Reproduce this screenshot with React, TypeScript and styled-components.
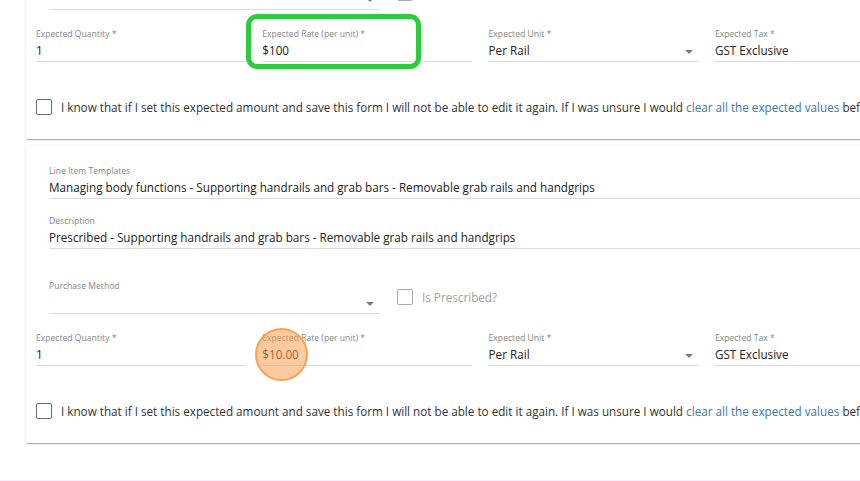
import React from 'react';
import styled, { createGlobalStyle } from 'styled-components';

const GlobalStyle = createGlobalStyle`
  html, body {
    margin: 0;
    padding: 0;
    background: #fff;
    overflow: hidden;
    font-family: 'Open Sans', 'Noto Sans', sans-serif;
  }
`;

const Page = styled.div`
  height: 481px;
  display: flex;
  flex-direction: column;
  overflow: hidden;
`;

const Cards = styled.div`
  margin-top: -158px;
  display: flex;
  flex-direction: column;
  gap: 7px;
`;

const Card = styled.div`
  margin-left: 26px;
  width: 900px;
  background: #fff;
  border-radius: 2px;
  box-shadow: 0 2px 1px -1px rgba(0,0,0,0.2), 0 1px 1px 0 rgba(0,0,0,0.12), 0 1px 3px 0 rgba(0,0,0,0.1);
  padding: 19px 0 25px 10px;
  box-sizing: border-box;
  height: 297px;
`;

const Upper = styled.div`
  padding-left: 13px;
  display: flex;
  flex-direction: column;
`;

const Field = styled.div<{ $gap?: number; $width?: number }>`
  position: relative;
  margin-top: ${p => p.$gap || 0}px;
  width: ${p => (p.$width ? `${p.$width}px` : 'auto')};
  border-bottom: 1px solid #dcdcdc;
  display: flex;
  flex-direction: column;
`;

const Label = styled.div`
  font-size: 8.6px;
  line-height: 12px;
  color: #858585;
  white-space: nowrap;
`;

const Value = styled.div`
  font-size: 11.7px;
  line-height: 21px;
  height: 21px;
  color: #222;
  white-space: nowrap;
  display: flex;
  align-items: center;
  justify-content: space-between;
  padding-right: 6px;
`;

const Arrow = styled.span`
  width: 0;
  height: 0;
  border-left: 4px solid transparent;
  border-right: 4px solid transparent;
  border-top: 4px solid #7a7a7a;
  margin-top: 2px;
`;

const PurchaseRow = styled.div`
  display: flex;
  align-items: center;
  gap: 17px;
  margin-top: 31px;
`;

const Box = styled.span<{ $light?: boolean }>`
  width: 16px;
  height: 16px;
  box-sizing: border-box;
  border: 1.5px solid ${p => (p.$light ? '#a9a9a9' : '#6b6b6b')};
  border-radius: 2px;
  flex-shrink: 0;
`;

const CheckLabel = styled.label<{ $muted?: boolean }>`
  display: flex;
  align-items: center;
  gap: 9px;
  font-size: 11.7px;
  color: ${p => (p.$muted ? '#a0a0a0' : '#333')};
  white-space: nowrap;
`;

const Grid = styled.div`
  display: grid;
  grid-template-columns: repeat(4, 210px);
  column-gap: 16.3px;
  margin-top: 18px;
`;

const Confirm = styled(CheckLabel)`
  margin-top: 36px;
  padding-top: 1px;
`;

const Link = styled.a`
  color: #3b78ad;
  text-decoration: none;
`;

const Highlight = styled.div`
  position: absolute;
  left: -16px;
  top: -14px;
  width: 175px;
  height: 55px;
  box-sizing: border-box;
  border: 5px solid #2ecb3f;
  border-radius: 11px;
  pointer-events: none;
`;

const Click = styled.div`
  position: absolute;
  left: -7px;
  top: -4px;
  width: 53px;
  height: 53px;
  box-sizing: border-box;
  border-radius: 50%;
  background: rgba(248, 160, 80, 0.55);
  border: 2px solid rgba(245, 150, 60, 0.75);
  pointer-events: none;
`;

const Footer = styled.div`
  margin-top: auto;
  height: 1px;
  background: #fde8fd;
`;

const LineItem = ({ rate, marker }: { rate: string; marker: 'box' | 'click' }) => (
  <Card>
    <Upper>
      <Field>
        <Label>Line Item Templates</Label>
        <Value>Managing body functions - Supporting handrails and grab bars - Removable grab rails and handgrips</Value>
      </Field>
      <Field $gap={16}>
        <Label>Description</Label>
        <Value>Prescribed - Supporting handrails and grab bars - Removable grab rails and handgrips</Value>
      </Field>
      <PurchaseRow>
        <Field $width={331}>
          <Label>Purchase Method</Label>
          <Value>
            <span />
            <Arrow />
          </Value>
        </Field>
        <CheckLabel $muted>
          <Box $light />
          Is Prescribed?
        </CheckLabel>
      </PurchaseRow>
    </Upper>
    <Grid>
      <Field>
        <Label>Expected Quantity *</Label>
        <Value>1</Value>
      </Field>
      <Field>
        {marker === 'box' && <Highlight />}
        <Label>Expected Rate (per unit) *</Label>
        <Value>{rate}</Value>
        {marker === 'click' && <Click />}
      </Field>
      <Field>
        <Label>Expected Unit *</Label>
        <Value>
          Per Rail
          <Arrow />
        </Value>
      </Field>
      <Field>
        <Label>Expected Tax *</Label>
        <Value>GST Exclusive</Value>
      </Field>
    </Grid>
    <Confirm>
      <Box />
      <span>
        I know that if I set this expected amount and save this form I will not be able to edit it again. If I was unsure I would{' '}
        <Link>clear all the expected values</Link> before saving.
      </span>
    </Confirm>
  </Card>
);

export default function App() {
  return (
    <Page>
      <GlobalStyle />
      <Cards>
        <LineItem rate="$100" marker="box" />
        <LineItem rate="$10.00" marker="click" />
      </Cards>
      <Footer />
    </Page>
  );
}
